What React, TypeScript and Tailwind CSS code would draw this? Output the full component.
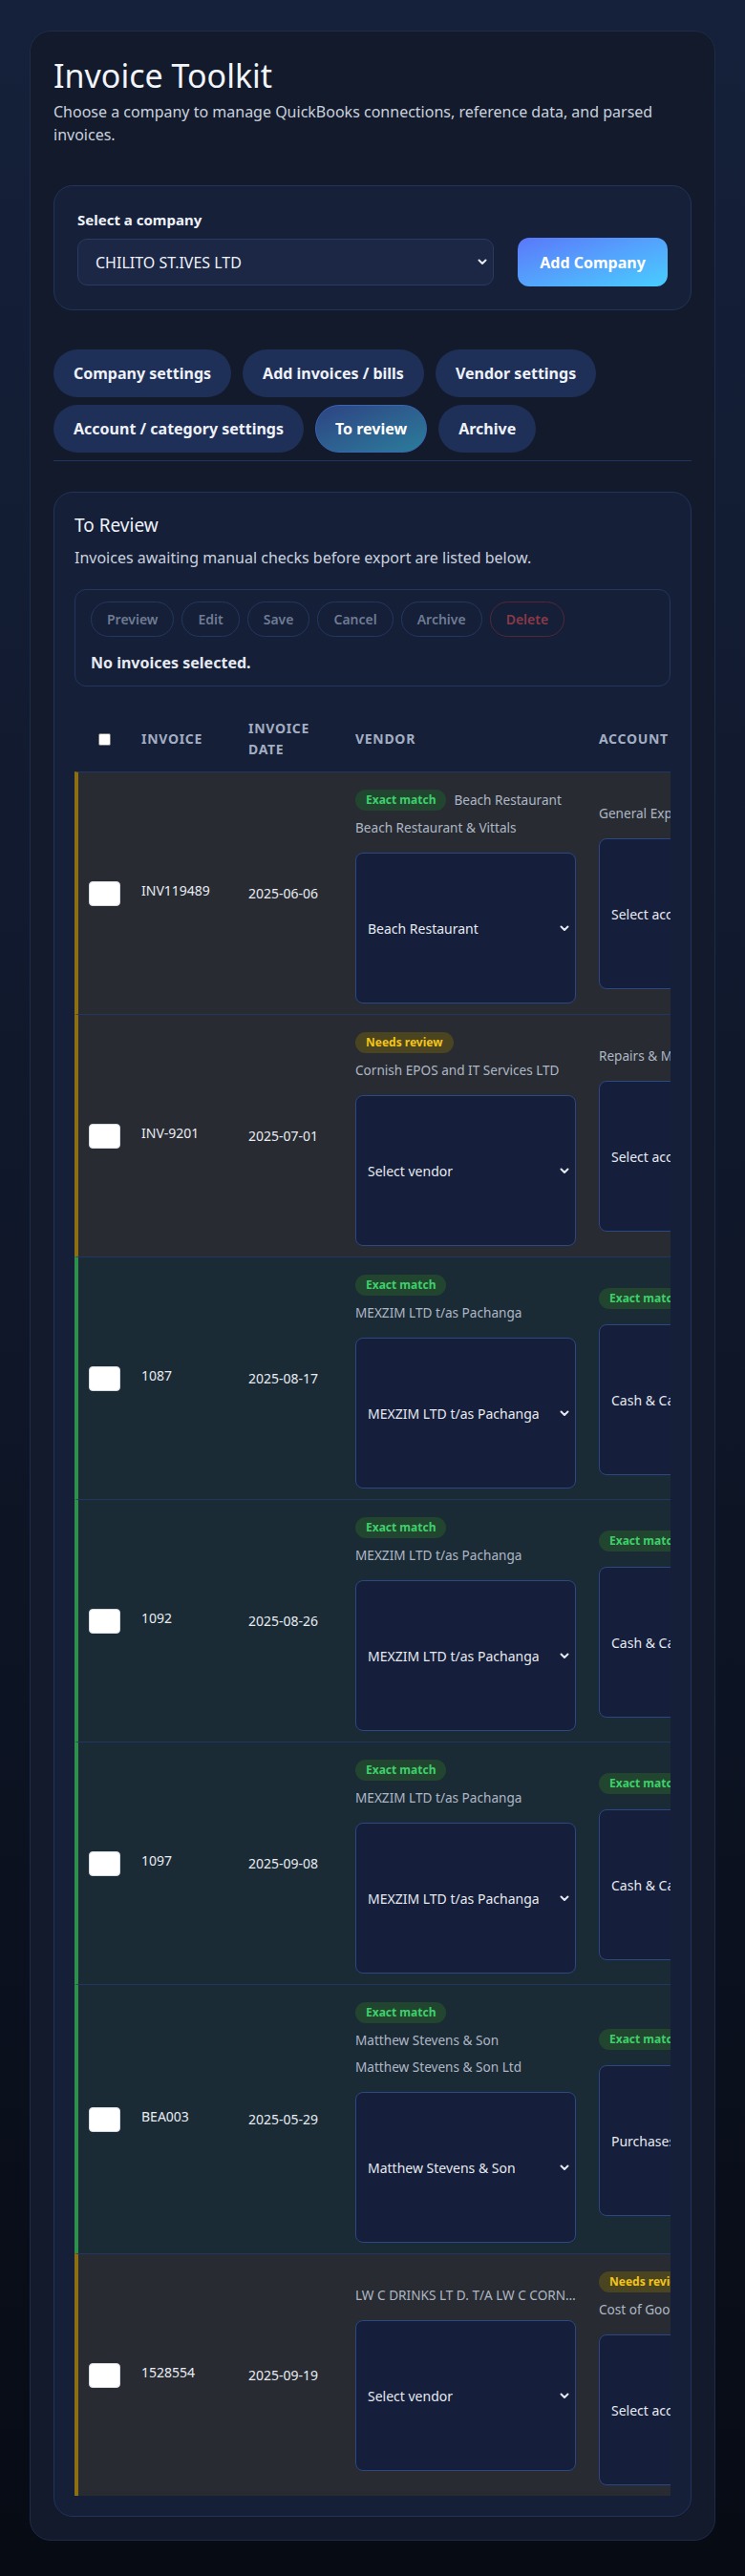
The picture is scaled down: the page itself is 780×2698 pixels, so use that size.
import React from "react";

type Tone = "gold" | "green";
type BadgeKind = "exact" | "review" | null;

interface ReviewRow {
    invoice: string;
    date: string;
    tone: Tone;
    vendorBadge: BadgeKind;
    vendorMatch?: string;
    vendorExtracted?: string;
    vendorSelect: string;
    accountBadge: BadgeKind;
    accountLabel?: string;
    accountSelect: string;
}

const rows: ReviewRow[] = [
    {
        invoice: "INV119489",
        date: "2025-06-06",
        tone: "gold",
        vendorBadge: "exact",
        vendorMatch: "Beach Restaurant",
        vendorExtracted: "Beach Restaurant & Vittals",
        vendorSelect: "Beach Restaurant",
        accountBadge: null,
        accountLabel: "General Expenses",
        accountSelect: "Select account",
    },
    {
        invoice: "INV-9201",
        date: "2025-07-01",
        tone: "gold",
        vendorBadge: "review",
        vendorExtracted: "Cornish EPOS and IT Services LTD",
        vendorSelect: "Select vendor",
        accountBadge: null,
        accountLabel: "Repairs & Maintenance",
        accountSelect: "Select account",
    },
    {
        invoice: "1087",
        date: "2025-08-17",
        tone: "green",
        vendorBadge: "exact",
        vendorExtracted: "MEXZIM LTD t/as Pachanga",
        vendorSelect: "MEXZIM LTD t/as Pachanga",
        accountBadge: "exact",
        accountSelect: "Cash & Carry",
    },
    {
        invoice: "1092",
        date: "2025-08-26",
        tone: "green",
        vendorBadge: "exact",
        vendorExtracted: "MEXZIM LTD t/as Pachanga",
        vendorSelect: "MEXZIM LTD t/as Pachanga",
        accountBadge: "exact",
        accountSelect: "Cash & Carry",
    },
    {
        invoice: "1097",
        date: "2025-09-08",
        tone: "green",
        vendorBadge: "exact",
        vendorExtracted: "MEXZIM LTD t/as Pachanga",
        vendorSelect: "MEXZIM LTD t/as Pachanga",
        accountBadge: "exact",
        accountSelect: "Cash & Carry",
    },
    {
        invoice: "BEA003",
        date: "2025-05-29",
        tone: "green",
        vendorBadge: "exact",
        vendorMatch: "Matthew Stevens & Son",
        vendorExtracted: "Matthew Stevens & Son Ltd",
        vendorSelect: "Matthew Stevens & Son",
        accountBadge: "exact",
        accountSelect: "Purchases",
    },
    {
        invoice: "1528554",
        date: "2025-09-19",
        tone: "gold",
        vendorBadge: null,
        vendorExtracted: "LW C DRINKS LT D. T/A LW C CORNWALL LTD",
        vendorSelect: "Select vendor",
        accountBadge: "review",
        accountLabel: "Cost of Goods Sold",
        accountSelect: "Select account",
    },
];

const tabs = [
    "Company settings",
    "Add invoices / bills",
    "Vendor settings",
    "Account / category settings",
    "To review",
    "Archive",
];

const actions = ["Preview", "Edit", "Save", "Cancel", "Archive"];

const Chevron = () => (
    <svg width="10" height="7" viewBox="0 0 10 7" fill="none" className="shrink-0">
        <path d="M1.5 1.5 L5 5 L8.5 1.5" stroke="#e5e9f0" strokeWidth="2" strokeLinecap="round" strokeLinejoin="round" />
    </svg>
);

const Badge = ({ kind }: { kind: BadgeKind }) => {
    if (kind === "exact") {
        return (
            <span className="inline-flex h-[22px] items-center rounded-full bg-[#21452f] px-[11px] text-[12px] font-bold text-[#3fcf6b] whitespace-nowrap">
                Exact match
            </span>
        );
    }
    if (kind === "review") {
        return (
            <span className="inline-flex h-[22px] items-center rounded-full bg-[#4b4421] px-[11px] text-[12px] font-bold text-[#f2c518] whitespace-nowrap">
                Needs review
            </span>
        );
    }
    return null;
};

const FakeSelect = ({ value }: { value: string }) => (
    <div className="flex h-[158px] w-full items-center justify-between rounded-[8px] border border-[#2b4784] bg-[#151e3a] pl-3 pr-[6px] text-[14px] text-[#e6eaf1]">
        <span className="whitespace-nowrap">{value}</span>
        <Chevron />
    </div>
);

const Row = ({ row }: { row: ReviewRow }) => {
    const toneClass =
        row.tone === "gold"
            ? "bg-[#282c32] border-l-[#8b6f12]"
            : "bg-[#1b2b36] border-l-[#2f8f4c]";

    return (
        <div className={`flex w-[1020px] items-center border-t border-l-4 border-t-[#213761] ${toneClass}`}>
            <div className="flex w-[54px] shrink-0 justify-center py-3">
                <div className="h-[26px] w-[33px] rounded-[4px] border border-[#d7dbe2] bg-white"></div>
            </div>
            <div className="w-[112px] shrink-0 px-3 pb-[18px] pt-3 text-[14px] text-[#e8ecf2]">{row.invoice}</div>
            <div className="w-[112px] shrink-0 px-3 py-3 text-[14px] text-[#e8ecf2]">{row.date}</div>
            <div className="w-[255px] shrink-0 px-3 pb-[11px] pt-[18px]">
                <div className="flex flex-col gap-2">
                    {(row.vendorBadge || row.vendorMatch) && (
                        <div className="flex flex-wrap items-center gap-2">
                            <Badge kind={row.vendorBadge} />
                            {row.vendorMatch && (
                                <span className="text-[13.6px] leading-5 text-[#aeb7c5]">{row.vendorMatch}</span>
                            )}
                        </div>
                    )}
                    {row.vendorExtracted && (
                        <p className="truncate text-[13.6px] leading-5 text-[#aeb7c5]">{row.vendorExtracted}</p>
                    )}
                    <div className="mt-2">
                        <FakeSelect value={row.vendorSelect} />
                    </div>
                </div>
            </div>
            <div className="w-[255px] shrink-0 px-3 pb-[11px] pt-[18px]">
                <div className="flex flex-col gap-2">
                    {row.accountBadge && (
                        <div className="flex items-center gap-2">
                            <Badge kind={row.accountBadge} />
                        </div>
                    )}
                    {row.accountLabel && (
                        <p className="truncate text-[13.6px] leading-5 text-[#aeb7c5]">{row.accountLabel}</p>
                    )}
                    <div className="mt-2">
                        <FakeSelect value={row.accountSelect} />
                    </div>
                </div>
            </div>
            <div className="w-[120px] shrink-0 px-3 py-3 text-[14px] text-[#e8ecf2]">£0.00</div>
        </div>
    );
};

export default function App() {
    return (
        <div className="min-h-[2698px] bg-gradient-to-b from-[#15203a] via-[#0f1729] to-[#070b14] px-[31px] pb-[33px] pt-[32px] font-['Noto_Sans',sans-serif] text-[#e8ecf3]">
            <div className="rounded-[22px] border border-[#1f2c48] bg-[#121a2b] p-6">
                <h1 className="text-[34px] font-normal leading-[44px] text-[#f1f4f9]">Invoice Toolkit</h1>
                <p className="mt-1 text-[16px] leading-6 text-[#c9d1de]">
                    Choose a company to manage QuickBooks connections, reference data, and parsed invoices.
                </p>

                {/* company picker */}
                <div className="mt-[41px] rounded-[20px] border border-[#22345a] bg-[#162039] p-6">
                    <label className="block text-[15px] font-bold leading-[22px] text-[#eef2f8]">Select a company</label>
                    <div className="mt-2 flex items-center gap-[25px]">
                        <div className="flex h-[49px] flex-1 items-center justify-between rounded-[10px] border border-[#2a3a62] bg-[#1b2745] pl-[18px] pr-[6px] text-[16px] text-[#eef2f8]">
                            <span>CHILITO ST.IVES LTD</span>
                            <Chevron />
                        </div>
                        <button className="h-[51px] w-[157px] rounded-[12px] bg-gradient-to-br from-[#5a77fa] to-[#47cdfd] text-[16px] font-bold text-white">
                            Add Company
                        </button>
                    </div>
                </div>

                {/* tabs */}
                <div className="mt-[41px] flex flex-wrap gap-x-3 gap-y-2 border-b border-[#1f3461] pb-2">
                    {tabs.map((tab) =>
                        tab === "To review" ? (
                            <button
                                key={tab}
                                className="h-[50px] rounded-full border border-[#3a64b4] bg-gradient-to-br from-[#2d4383] to-[#2a7d9b] px-5 text-[16px] font-bold text-white"
                            >
                                {tab}
                            </button>
                        ) : (
                            <button
                                key={tab}
                                className="h-[50px] rounded-full bg-[#1f3058] px-[21px] text-[16px] font-bold text-[#eef2f8]"
                            >
                                {tab}
                            </button>
                        )
                    )}
                </div>

                {/* review panel */}
                <div className="mt-[32px] rounded-[20px] border border-[#22345c] bg-[#151f38] p-[21px]">
                    <h2 className="text-[19px] font-normal leading-[27px] text-[#eef2f8]">To Review</h2>
                    <p className="mt-2 text-[16px] leading-6 text-[#c9d1de]">
                        Invoices awaiting manual checks before export are listed below.
                    </p>

                    <div className="mt-[21px] rounded-[12px] border border-[#22365f] px-4 py-3">
                        <div className="flex flex-wrap gap-2">
                            {actions.map((a) => (
                                <button
                                    key={a}
                                    className="h-[37px] rounded-full border border-[#24375f] px-4 text-[14px] font-semibold text-[#6e7b93]"
                                >
                                    {a}
                                </button>
                            ))}
                            <button className="h-[37px] rounded-full border border-[#55263a] px-4 text-[14px] font-semibold text-[#8a3948]">
                                Delete
                            </button>
                        </div>
                        <p className="mt-[15px] text-[16px] font-bold leading-6 text-[#e6ebf3]">No invoices selected.</p>
                    </div>

                    {/* table */}
                    <div className="mt-[21px] overflow-hidden">
                        <div className="flex w-[1020px] items-center border-l-4 border-l-transparent text-[14px] font-bold uppercase leading-[22px] tracking-[0.05em] text-[#a3aec2]">
                            <div className="flex w-[54px] shrink-0 justify-center py-3">
                                <div className="h-[13px] w-[13px] rounded-[2px] border border-[#767676] bg-white"></div>
                            </div>
                            <div className="w-[112px] shrink-0 px-3 py-3">Invoice</div>
                            <div className="w-[112px] shrink-0 px-3 py-3">Invoice date</div>
                            <div className="w-[255px] shrink-0 px-3 py-3">Vendor</div>
                            <div className="w-[255px] shrink-0 px-3 py-3">Account</div>
                            <div className="w-[120px] shrink-0 px-3 py-3">Amount</div>
                        </div>
                        {rows.map((row) => (
                            <Row key={row.invoice} row={row} />
                        ))}
                    </div>
                </div>
            </div>
        </div>
    );
}
